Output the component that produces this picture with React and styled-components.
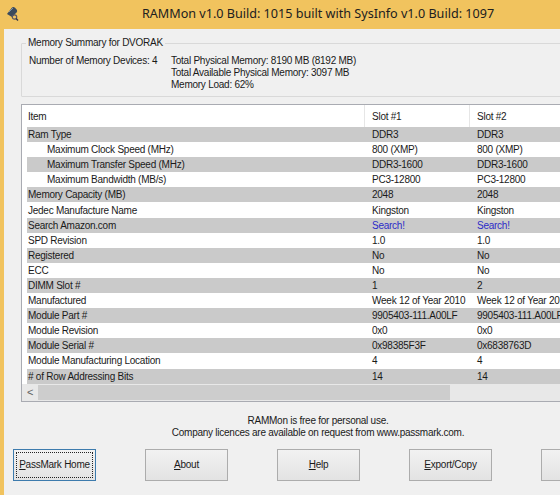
import React from "react";
import styled, { createGlobalStyle } from "styled-components";

const GlobalStyle = createGlobalStyle`
  html, body {
    margin: 0;
    padding: 0;
    overflow: hidden;
    background: #f0f0f0;
  }
  body {
    font-family: "Liberation Sans", Arial, sans-serif;
    font-size: 10px;
    letter-spacing: -0.25px;
    color: #1a1a1a;
  }
`;

const Window = styled.div`
  width: 636px;
  height: 495px;
  background: #f1c35e;
  display: flex;
  flex-direction: column;
`;

const TitleBar = styled.div`
  height: 29px;
  flex: none;
  display: grid;
  grid-template-columns: 1fr auto 1fr;
  align-items: center;
`;

const TitleText = styled.div`
  font-family: "Noto Sans", "Open Sans", sans-serif;
  font-size: 12.6px;
  letter-spacing: 0;
  color: #202020;
  padding-bottom: 2px;
  white-space: nowrap;
`;

const IconSlot = styled.div`
  display: flex;
  align-items: center;
  padding-left: 4px;
  padding-bottom: 4px;
`;

const Controls = styled.div`
  justify-self: end;
  display: flex;
  align-items: center;
`;

const CtrlBtn = styled.div`
  width: ${(p) => p.$w || 27}px;
  height: 20px;
  display: flex;
  align-items: center;
  justify-content: center;
  padding-bottom: 4px;
`;

const MinGlyph = styled.div`
  width: 9px;
  height: 2px;
  background: #2a2a2a;
`;

const Client = styled.div`
  flex: 1;
  margin-left: 4px;
  background: #f0f0f0;
  display: flex;
  flex-direction: column;
`;

const Inner = styled.div`
  padding: 8px 0 0 17px;
`;

const Group = styled.fieldset`
  width: 560px;
  margin: 0;
  padding: 6px 8px 5px 7px;
  border: 1px solid #d9d9d9;
  border-radius: 1px;
`;

const Legend = styled.legend`
  padding: 0 2px;
  margin-left: -3px;
  line-height: 12px;
  color: #1a1a1a;
`;

const SummaryRow = styled.div`
  display: flex;
  line-height: 12px;
`;

const SummaryLabel = styled.div`
  width: 142px;
  white-space: nowrap;
`;

const SummaryLines = styled.div`
  display: flex;
  flex-direction: column;
  white-space: nowrap;
`;

const List = styled.div`
  margin-top: 7px;
  width: 600px;
  border: 1px solid #a9abb2;
  background: #ffffff;
`;

const Rows = styled.div`
  padding-left: 5px;
`;

const Row = styled.div`
  display: grid;
  grid-template-columns: 338px 105px 105px 105px;
  height: ${(p) => (p.$header ? "22px" : "15.1px")};
  align-items: center;
  background: ${(p) => (p.$shade ? "#cacaca" : "transparent")};
`;

const Cell = styled.div`
  height: 100%;
  display: flex;
  align-items: center;
  white-space: nowrap;
  overflow: hidden;
  padding-left: ${(p) => (p.$first ? (p.$indent ? 20 : 1) : 7)}px;
  color: ${(p) => (p.$link ? "#2c2cc8" : "#1a1a1a")};
  border-right: ${(p) => (p.$header ? "1px solid #e6e6e6" : "none")};
  box-sizing: border-box;
`;

const HScroll = styled.div`
  height: 17px;
  display: flex;
  background: #e8e8e8;
`;

const ArrowBtn = styled.div`
  width: 16px;
  display: flex;
  align-items: center;
  justify-content: center;
  color: #606060;
  font-size: 11px;
`;

const Thumb = styled.div`
  width: 412px;
  margin: 1px 0;
  background: #cdcdcd;
`;

const Notice = styled.div`
  width: 628px;
  margin-top: 13px;
  text-align: center;
  line-height: 12px;
`;

const ButtonRow = styled.div`
  display: flex;
  gap: 49px;
  padding-left: 9px;
  margin-top: 10px;
`;

const Button = styled.div`
  width: 83px;
  height: 32px;
  flex: none;
  box-sizing: border-box;
  display: flex;
  align-items: center;
  justify-content: center;
  border: 1px solid ${(p) => (p.$focus ? "#3d7bad" : "#acacac")};
  background: linear-gradient(#f2f2f2, #e3e3e3);
  padding: 2px;
`;

const FocusRing = styled.div`
  flex: 1;
  align-self: stretch;
  display: flex;
  align-items: center;
  justify-content: center;
  border: 1px dotted ${(p) => (p.$on ? "#222" : "transparent")};
  white-space: nowrap;
`;

const rows = [
  ["Ram Type", false, "DDR3", "DDR3"],
  ["Maximum Clock Speed (MHz)", true, "800 (XMP)", "800 (XMP)"],
  ["Maximum Transfer Speed (MHz)", true, "DDR3-1600", "DDR3-1600"],
  ["Maximum Bandwidth (MB/s)", true, "PC3-12800", "PC3-12800"],
  ["Memory Capacity (MB)", false, "2048", "2048"],
  ["Jedec Manufacture Name", false, "Kingston", "Kingston"],
  ["Search Amazon.com", false, "Search!", "Search!", true],
  ["SPD Revision", false, "1.0", "1.0"],
  ["Registered", false, "No", "No"],
  ["ECC", false, "No", "No"],
  ["DIMM Slot #", false, "1", "2"],
  ["Manufactured", false, "Week 12 of Year 2010", "Week 12 of Year 2010"],
  ["Module Part #", false, "9905403-111.A00LF", "9905403-111.A00LF"],
  ["Module Revision", false, "0x0", "0x0"],
  ["Module Serial #", false, "0x98385F3F", "0x6838763D"],
  ["Module Manufacturing Location", false, "4", "4"],
  ["# of Row Addressing Bits", false, "14", "14"],
];

const buttons = [
  ["P", "assMark Home"],
  ["A", "bout"],
  ["H", "elp"],
  ["E", "xport/Copy"],
  ["", "Close"],
];

const AppIcon = () => (
  <svg width="16" height="16" viewBox="0 0 16 16">
    <path d="M3 9 L8 2.5 Q9.5 1.5 11 2.8 L13 5 Q13.5 6.5 12.5 7.5 L8 12 Z" fill="#3b4a5c" />
    <path d="M5 7 L9 3" stroke="#7f93a8" strokeWidth="1" />
    <circle cx="10.5" cy="12" r="2.2" fill="none" stroke="#556" strokeWidth="1.2" />
    <path d="M12 13.5 L14 15.5" stroke="#334" strokeWidth="1.4" />
  </svg>
);

export default function App() {
  return (
    <Window>
      <GlobalStyle />
      <TitleBar>
        <IconSlot>
          <AppIcon />
        </IconSlot>
        <TitleText>RAMMon v1.0 Build: 1015 built with SysInfo v1.0 Build: 1097</TitleText>
        <Controls>
          <CtrlBtn $w={30}>
            <MinGlyph />
          </CtrlBtn>
          <CtrlBtn $w={26} />
          <CtrlBtn $w={22} />
        </Controls>
      </TitleBar>
      <Client>
        <Inner>
          <Group>
            <Legend>Memory Summary for DVORAK</Legend>
            <SummaryRow>
              <SummaryLabel>Number of Memory Devices: 4</SummaryLabel>
              <SummaryLines>
                <span>Total Physical Memory: 8190 MB (8192 MB)</span>
                <span>Total Available Physical Memory: 3097 MB</span>
                <span>Memory Load: 62%</span>
              </SummaryLines>
            </SummaryRow>
          </Group>
          <List>
            <Rows>
              <Row $header>
                <Cell $first $header>Item</Cell>
                <Cell $header>Slot #1</Cell>
                <Cell $header>Slot #2</Cell>
                <Cell $header>Slot #3</Cell>
              </Row>
              {rows.map(([label, indent, a, b, link], i) => (
                <Row key={label} $shade={i % 2 === 0}>
                  <Cell $first $indent={indent}>{label}</Cell>
                  <Cell $link={link}>{a}</Cell>
                  <Cell $link={link}>{b}</Cell>
                  <Cell $link={link}>{b}</Cell>
                </Row>
              ))}
            </Rows>
            <HScroll>
              <ArrowBtn>&lt;</ArrowBtn>
              <Thumb />
            </HScroll>
          </List>
        </Inner>
        <Notice>
          RAMMon is free for personal use.
          <br />
          Company licences are available on request from www.passmark.com.
        </Notice>
        <ButtonRow>
          {buttons.map(([key, rest], i) => (
            <Button key={rest} $focus={i === 0}>
              <FocusRing $on={i === 0}>
                <span>
                  <u>{key}</u>
                  {rest}
                </span>
              </FocusRing>
            </Button>
          ))}
        </ButtonRow>
      </Client>
    </Window>
  );
}
